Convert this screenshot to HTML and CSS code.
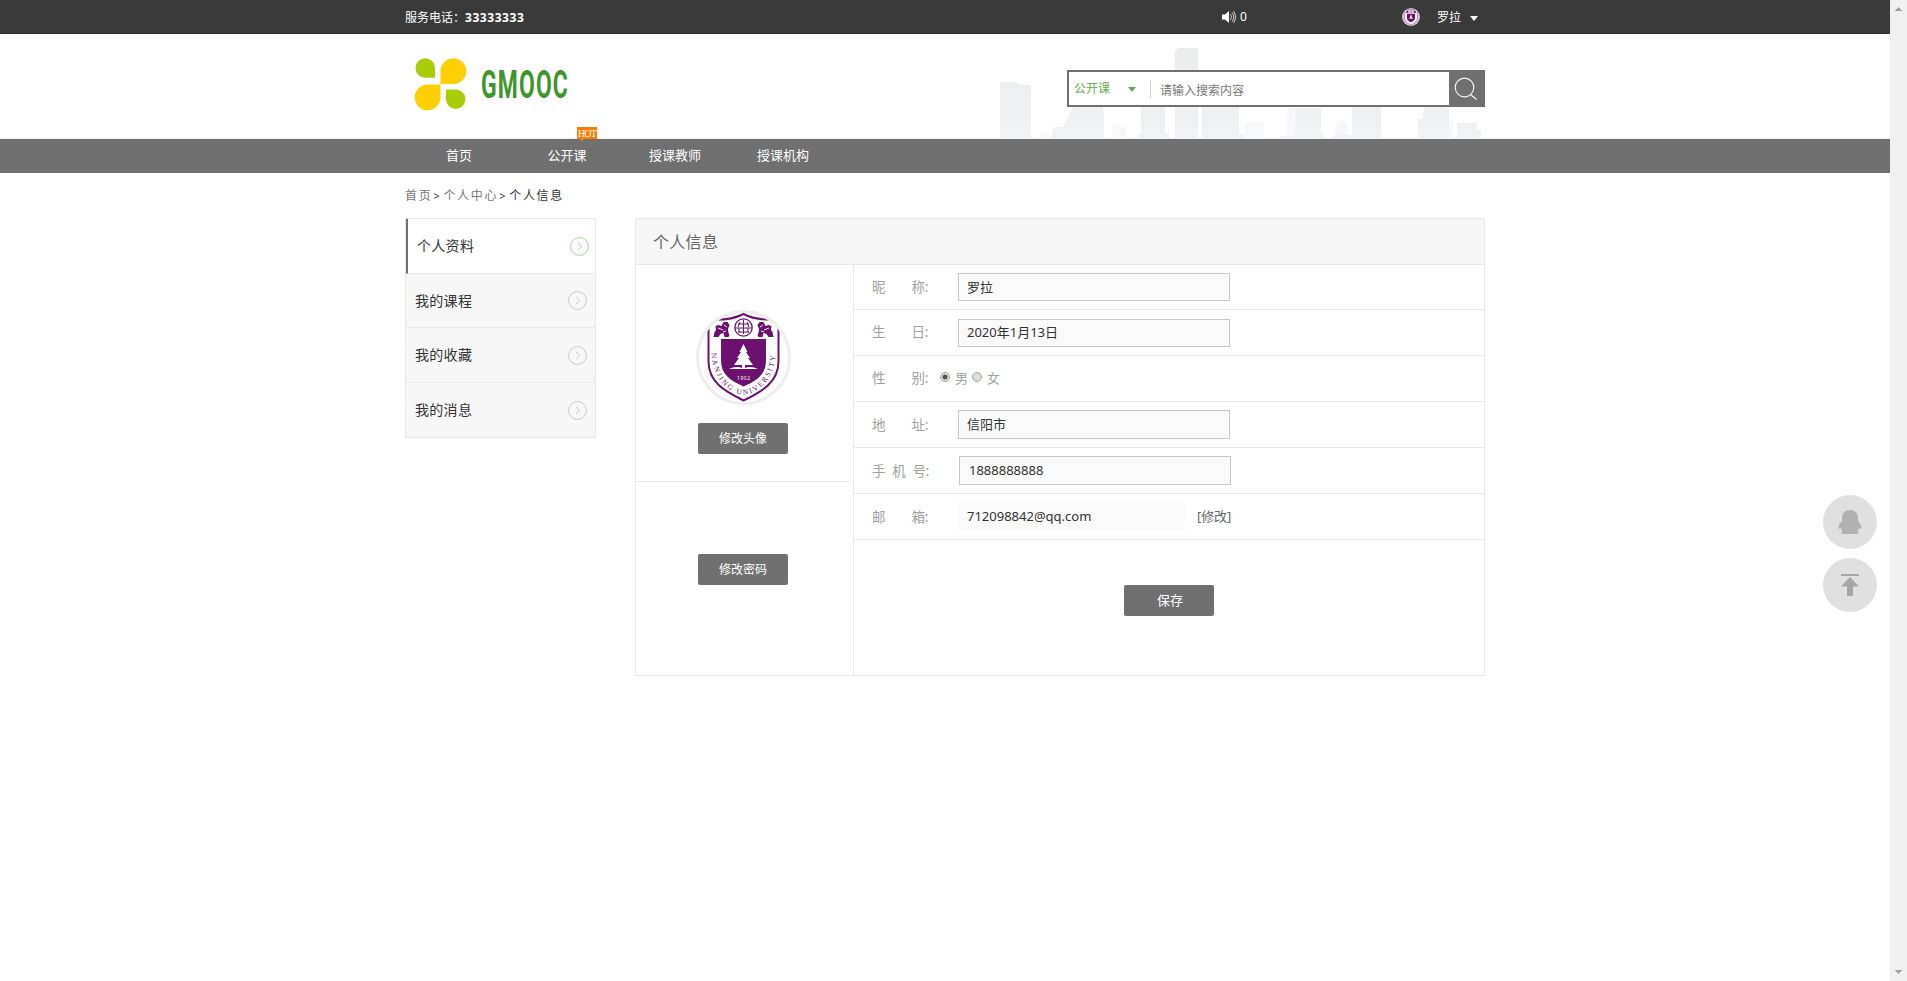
FILE: index.html
```html
<!DOCTYPE html>
<html lang="zh-CN">
<head>
<meta charset="utf-8">
<title>个人信息</title>
<link rel="stylesheet" href="styles.css">
</head>
<body>
<svg class="defs" width="0" height="0">
  <symbol id="arrow" viewBox="0 0 19 19"><circle cx="9.5" cy="9.5" r="8.9" fill="none" stroke="currentColor"/><path d="M8 6l3.6 3.5L8 13" fill="none" stroke="currentColor"/></symbol>
  <symbol id="crest" viewBox="0 0 89 89">
    <path d="M9.500 19V6.500C25 7.500 35 6 44.500 1 54 6 64 7.500 79.500 6.500V48C79.500 69 64 78 44.500 87.500 25 78 9.500 69 9.500 48Z" fill="#fff" stroke="#6c1170" stroke-width="2"/>
    <path d="M22 26H67V47C67 61 59 67 44.500 73.500 30 67 22 61 22 47Z" fill="#6c1170"/>
    <g fill="none" stroke="#6c1170"><circle cx="44.500" cy="14.500" r="8.700" stroke-width="1.300"/><path d="M39 11h11M36 15h17M39 19h11M44.500 7v14M41 9l-2 5M48 9l2 5M40 15v5M49 15v5"/></g>
    <g id="lion" fill="#6c1170"><path d="M14.500 24l1-5 1.500-2-.5-4 3-1 3 1 2-4 4 0 2 3-1.500 4 .5 4 1 2-1 2h-4l-1-4-3 1-2 3z"/><path d="M19 15l5 2M25 12l3 2M24 19l3-1" stroke="#fff" stroke-width=".9"/></g>
    <use href="#lion" transform="translate(89 0) scale(-1 1)"/>
    <path d="M44.500 31l4 8h-1.500l4 6h-2l5 7H46v3c4-2 9-1 13 1H30c4-2 9-3 13-1v-3h-8l5-7h-2l4-6h-1.500z" fill="#fff"/>
  </symbol>
</svg>
<div class="page">
  <div class="topbar"><div class="wrap topbar-in">
    <span class="tel">服务电话：<b>33333333</b></span>
    <span class="notice"><svg width="14" height="14"><path d="M0 4.500h3L7 1v12L3 9.500H0z" fill="#fff"/><path d="M8.500 4q2 3 0 6M10 2.500q3.500 4.500 0 9M11.500 1q4 6 0 12" fill="none" stroke="#ccc"/></svg>0</span>
    <span class="mini"><svg width="16" height="16"><use href="#crest"/></svg></span>
    <span class="user">罗拉</span><i class="caret"></i>
  </div></div>
  <header class="header"><div class="wrap header-in">
    <svg class="logo" width="180" height="60">
      <g fill="#a9cd06"><path d="M10.500 18a9.700 9.700 0 0 1 19.500 0v9.800H20.300a9.700 9.700 0 0 1-9.800-9.800z"/><path d="M41 39.500h10a9.700 9.700 0 1 1-10 10z"/></g>
      <g fill="#ffd003"><path d="M35.500 34V21a12.900 12.900 0 1 1 13 13z"/><path d="M35.500 34.500V47a12.900 12.900 0 1 1-13-12.500z"/></g>
      <text x="76" y="48" class="brand" textLength="88" lengthAdjust="spacingAndGlyphs">GMOOC</text>
    </svg>
    <div class="finder">
      <svg class="skyline" width="485" height="91">
        <defs><linearGradient id="fog" x1="0" y1="0" x2="0" y2="91" gradientUnits="userSpaceOnUse"><stop offset="0" stop-color="#ebecec"/><stop offset="1" stop-color="#f0f2f3"/></linearGradient></defs>
        <path fill="#f7f8fa" d="M41 91V85h8v6zM112 91V76l14 3v12zM245 91V76l3-2h13l3 2v15zM287 91V60h12v31zM335 91V78l5-5h5l3 3v15zM425 91V74h28v17z"/>
        <path fill="url(#fog)" d="M0 91V35l3-1h10l9 3h9v54zM50 91l4-12h9l10-20h30l1 8v24zM138 91v-5h3V50h24v35h4v6zM175 91V3l3-3h20v91zM202 91V50h37v36h4v5zM280 91v-3h15l1-28h25v26h3v5zM334 91v-4h18V55h29v36zM418 91V71h5l1-16h19l6 8v28zM457 91V75h20v7h4v9z"/>
      </svg>
      <div class="search">
        <span class="kind">公开课<i class="caret green"></i></span>
        <span class="query">请输入搜索内容</span>
        <span class="go"><svg width="24" height="24" fill="none" stroke="#f2f2f2" stroke-width="1.200"><circle cx="10.500" cy="10.500" r="9.300"/><path d="M16.500 17.500l6 5"/></svg></span>
      </div>
    </div>
  </div></header>
  <nav class="nav"><div class="wrap nav-in">
    <a>首页</a><a>公开课<em class="hot">HOT</em></a><a>授课教师</a><a>授课机构</a>
  </div></nav>
  <div class="wrap">
    <div class="crumbs"><span>首页</span><i>&gt;</i><span>个人中心</span><i>&gt;</i><strong>个人信息</strong></div>
    <div class="content">
      <aside class="side">
        <a class="on">个人资料<svg width="19" height="19"><use href="#arrow"/></svg></a>
        <a>我的课程<svg width="19" height="19"><use href="#arrow"/></svg></a>
        <a>我的收藏<svg width="19" height="19"><use href="#arrow"/></svg></a>
        <a>我的消息<svg width="19" height="19"><use href="#arrow"/></svg></a>
      </aside>
      <main class="card">
        <h1>个人信息</h1>
        <div class="card-body">
          <div class="photo-col">
            <div class="photo"><div class="avatar"><svg width="89" height="89"><use href="#crest"/>
              <path id="motto" d="M12.500 40C13 64 29 81.500 44.500 81.500 60 81.500 76 64 76.500 40" fill="none"/>
              <text x="38" y="67" class="year" textLength="13">1902</text>
              <text class="motto"><textPath href="#motto" textLength="112">NANJING UNIVERSITY</textPath></text>
            </svg></div><span class="btn">修改头像</span></div>
            <div class="pwd"><span class="btn">修改密码</span></div>
          </div>
          <div class="form">
            <div class="row first"><label><b>昵</b><b>称:</b></label><span class="field">罗拉</span></div>
            <div class="row up"><label><b>生</b><b>日:</b></label><span class="field">2020年1月13日</span></div>
            <div class="row up"><label><b>性</b><b>别:</b></label><span class="sex"><i class="radio checked"></i>男<i class="radio second"></i>女</span></div>
            <div class="row"><label><b>地</b><b>址:</b></label><span class="field tall">信阳市</span></div>
            <div class="row"><label class="three"><b>手</b><b>机</b><b>号:</b></label><span class="field tall phone">1888888888</span></div>
            <div class="row"><label><b>邮</b><b>箱:</b></label><span class="mail">712098842@qq.com</span><a class="edit">[修改]</a></div>
            <div class="save"><span class="btn big">保存</span></div>
          </div>
        </div>
      </main>
    </div>
  </div>
</div>
<div class="scroll"><svg width="7" height="4"><path d="M3 0h1v1h1v1h1v1h1v1H0V3h1V2h1V1h1z" fill="#a3a3a3"/></svg><svg width="7" height="4"><path d="M0 0h7v1H6v1H5v1H4v1H3V3H2V2H1V1H0z" fill="#a3a3a3"/></svg></div>
<div class="float">
  <span><svg width="26" height="26"><path d="M13 1c5 0 8 3 8 8v3c2 2 4 5 3.500 8l-2-1c-.5 1-1 2-2 3 2 1 1.500 3-2 3h-5c-4 0-3 0-6 0-4 0-4-2-2-3-1-1-1.500-2-2-3l-2 1C1 17 3 14 5 12V9c0-5 3-8 8-8z" fill="#b1b1b1"/></svg></span>
  <span><svg width="26" height="26"><path d="M4 2h18v2H4zM13 5l9 9.500h-6V24h-6v-9.500H4z" fill="#a6a6a6"/></svg></span>
</div>
</body>
</html>
```
FILE: styles.css
```css
* { box-sizing: border-box; }
body { margin: 0; height: 981px; display: flex; overflow: hidden; background: #fff; color: #333; font: 13px/20px "Noto Sans", "Noto Sans CJK SC", sans-serif; }
i, em { font-style: normal; }
svg { display: block; flex: none; }
.defs { position: absolute; }
.page { flex: 1; }
.wrap { width: 1080px; margin: 0 auto; }

.topbar { height: 34px; background: #3a3a3a; border-bottom: 1px solid #383237; color: #fff; font-size: 12px; }
.topbar-in { display: flex; align-items: center; height: 34px; }
.tel { width: 817px; padding-top: 2px; }
.tel b { letter-spacing: .55px; }
.notice { display: flex; align-items: center; gap: 4px; width: 180px; }
.mini { display: flex; align-items: center; justify-content: center; width: 18px; height: 18px; border-radius: 50%; background: #d7bdd8; overflow: hidden; }
.user { margin-left: 17px; padding-top: 2px; }
.caret { margin: 3px 0 0 9px; border: 4px solid transparent; border-top: 5px solid #fff; border-bottom: 0; }
.caret.green { border-top-color: #5fad4e; margin: 1px 0 0 18px; }

.header { height: 105px; border-bottom: 1px solid #eee; }
.header-in { display: flex; justify-content: space-between; height: 105px; }
.logo { margin-top: 16px; overflow: visible; }
.brand { font: bold 39px/44px Roboto, sans-serif; letter-spacing: 2px; fill: #3e972b; }
.finder { display: grid; width: 485px; margin-top: 14px; }
.skyline, .search { grid-area: 1 / 1; }
.search { display: flex; align-items: center; width: 418px; height: 37px; margin: 22px 0 0 67px; border: 2px solid #707070; background: #fff; font-size: 12px; }
.kind { display: flex; align-items: center; width: 82px; height: 18px; padding-left: 5px; border-right: 1px solid #ccc; color: #5fad4e; line-height: 16px; }
.query { flex: 1; padding: 5px 0 0 9px; color: #777; }
.go { display: flex; align-items: center; justify-content: center; width: 34px; height: 33px; background: #707070; }

.nav { height: 34px; background: #707070; color: #fff; }
.nav-in { display: flex; }
.nav a { position: relative; width: 108px; text-align: center; line-height: 33px; }
.hot { position: absolute; left: 64px; top: -12px; width: 20px; height: 12px; background: #ff7e00; font: 10px/13px "Liberation Serif", serif; letter-spacing: -.8px; }
.hot::after { content: ""; position: absolute; left: 3px; top: 12px; border: 2px solid transparent; border-top-color: #ff7e00; border-bottom: 0; }

.crumbs { display: flex; height: 45px; font-size: 12px; line-height: 46px; letter-spacing: 1.7px; color: #777; }
.crumbs i { width: 10px; padding-left: 1px; font-size: 11px; color: #333; }
.crumbs i + span, .crumbs strong { margin-left: 1px; }
.crumbs strong { font-weight: normal; color: #333; }
.content { display: flex; justify-content: space-between; align-items: flex-start; }

.side { width: 191px; border: 1px solid #e8e8e8; background: #f7f7f7; font-size: 14px; letter-spacing: .3px; }
.side a { display: flex; align-items: center; justify-content: space-between; height: 55px; padding: 0 8px 0 9px; border-bottom: 1px solid #e8e8e8; }
.side a:nth-child(2) { height: 54px; }
.side a:last-child { border-bottom: 0; height: 54px; }
.side svg { color: #c8c8c8; }
.side .on { padding: 0 6px 0 9px; border-left: 2px solid #707070; background: #fff; }
.side .on svg { color: #9fd892; }

.card { width: 850px; height: 458px; border: 1px solid #e8e8e8; }
h1 { height: 46px; margin: 0; padding-left: 17px; border-bottom: 1px solid #e8e8e8; background: #f7f7f7; color: #666; font-size: 16px; font-weight: normal; letter-spacing: .3px; line-height: 46px; }
.card-body { display: flex; height: 410px; }
.photo-col { width: 217px; padding-right: 2px; }
.photo, .pwd { display: flex; flex-direction: column; align-items: center; }
.photo { height: 217px; padding: 45px 1px 0 0; border-bottom: 1px solid #e8e8e8; }
.pwd { padding: 72px 1px 0 0; }
.avatar { display: grid; place-items: center; width: 95px; height: 95px; margin: 0 0 18px 1px; border: 3px solid #eee; border-radius: 50%; overflow: hidden; }
.motto { font: 7.500px "Liberation Serif", serif; fill: #6c1170; }
.year { font-size: 5px; fill: #fff; }
.btn { width: 90px; height: 31px; border-radius: 2px; background: #707070; color: #fff; font-size: 12px; line-height: 31px; text-align: center; }
.big { font-size: 13px; padding-left: 2px; }

.form { flex: 1; border-left: 1px solid #e8e8e8; }
.row { display: flex; align-items: center; height: 46px; padding-left: 18px; border-bottom: 1px solid #e8e8e8; color: #a0a0a0; }
.first { height: 45px; }
label { display: flex; justify-content: space-between; width: 56.500px; margin-right: 29.500px; }
label b { font-weight: normal; font-size: 13.500px; }
.three { width: 57.500px; }
.field, .mail { height: 28px; padding-left: 8px; border: 1px solid #c8c8c8; background: #fafafa; color: #333; line-height: 26px; width: 272px; }
.up label, .up .sex { padding-bottom: 2px; }
.up .field { line-height: 25px; }
.tall { height: 29px; }
.phone { padding-left: 9px; }
.mail { height: 27px; width: 227px; padding-left: 9px; border: 0; line-height: 26px; }
.edit { margin-left: 12px; padding-bottom: 2px; color: #666; letter-spacing: -.1px; }
.sex { display: flex; align-items: center; margin-left: -18px; }
.radio { width: 10px; height: 10px; margin: -2px 5px 0 0; border: 1px solid #a5a5a5; border-radius: 50%; background: #ddd; }
.checked { background: radial-gradient(circle, #555 0 2.200px, #ddd 2.800px); }
.second { margin-left: 4px; }
.save { display: flex; justify-content: center; padding: 45px 0 0 0; }

.scroll { display: flex; flex-direction: column; justify-content: space-between; width: 17px; padding: 7px 0 7px 5px; background: #f0f0f0; }
.float { position: fixed; left: 1823px; top: 495px; display: grid; gap: 9px; }
.float span { display: grid; place-items: center; width: 54px; height: 54px; border-radius: 50%; background: #e0e0e0; }
```
